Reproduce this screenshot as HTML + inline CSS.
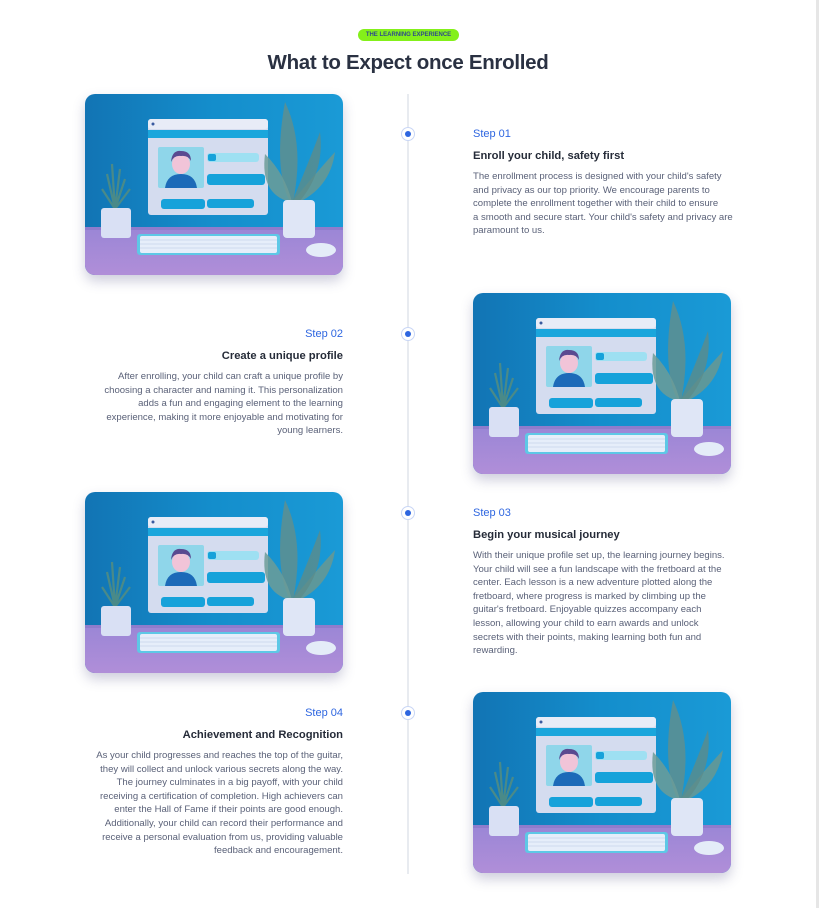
<!DOCTYPE html>
<html><head><meta charset="utf-8">
<style>
*{margin:0;padding:0;box-sizing:border-box}
html,body{width:819px;height:908px;background:#fff;overflow:hidden;font-family:"Liberation Sans",sans-serif}
.sb{position:absolute;right:0;top:0;width:3px;height:908px;background:#e6e6e6}
.tag{position:absolute;left:358px;top:29px;width:101px;height:12px;border-radius:6px;background:#84f01a;color:#2e4a8c;font-size:6px;font-weight:bold;text-align:center;line-height:12px}
h1{position:absolute;left:0;width:816px;top:51px;text-align:center;font-size:20.5px;color:#2a3142;font-weight:bold;letter-spacing:-0.3px}
.line{position:absolute;left:407px;top:94px;width:2px;height:780px;background:#e8ebf0}
.dot{position:absolute;left:401px;width:14px;height:14px;border-radius:50%;background:#fff;border:1px solid #c9d6f5}
.dot:after{content:"";position:absolute;left:3px;top:3px;width:6px;height:6px;border-radius:50%;background:#2e66e0}
.img{position:absolute;width:258px;height:181px;border-radius:10px;overflow:hidden;box-shadow:0 6px 12px rgba(60,60,120,.25)}
.txt{position:absolute;white-space:nowrap}
.txt.l{text-align:right;right:476px}
.txt.r{left:473px}
.st{font-size:11px;color:#2e66e0;height:14px}
.tt{font-size:11.2px;font-weight:bold;color:#252b38;margin-top:8px;height:14px}
.bd{font-size:9.55px;color:#5a6178;line-height:13.6px;margin-top:6px}
</style></head><body>
<div class="sb"></div>
<div class="tag">THE LEARNING EXPERIENCE</div>
<h1>What to Expect once Enrolled</h1>
<div class="line"></div>
<div class="dot" style="top:127px"></div>
<div class="dot" style="top:327px"></div>
<div class="dot" style="top:506px"></div>
<div class="dot" style="top:706px"></div>

<svg width="0" height="0" style="position:absolute">
<defs>
<linearGradient id="bg" x1="0" y1="0" x2="1" y2="0"><stop offset="0" stop-color="#1274b4"/><stop offset=".5" stop-color="#148ecc"/><stop offset="1" stop-color="#1a9ad6"/></linearGradient>
<linearGradient id="desk" x1="0" y1="0" x2="0" y2="1"><stop offset="0" stop-color="#9a86d6"/><stop offset="1" stop-color="#b08ed8"/></linearGradient>
<symbol id="ill" viewBox="0 0 258 181">
<rect width="258" height="181" fill="url(#bg)"/>
<rect y="133" width="258" height="48" fill="url(#desk)"/>
<rect y="133" width="258" height="3" fill="#8f7ccc"/>
<rect x="63" y="25" width="120" height="96" rx="3" fill="#d4dcef"/>
<rect x="63" y="25" width="120" height="10" rx="3" fill="#e8ecf7"/>
<rect x="63" y="36" width="120" height="8" fill="#1aa6dc"/>
<circle cx="68" cy="30" r="1.5" fill="#3a5aa0"/>
<rect x="73" y="53" width="46" height="41" rx="2" fill="#8fd6ea"/>
<ellipse cx="96" cy="70" rx="9" ry="10" fill="#f1c4d8"/>
<path d="M86 68 Q87 56 96 57 Q106 57 106 67 Q103 61 96 62 Q89 61 86 68Z" fill="#5a4a90"/>
<path d="M80 94 Q82 80 96 80 Q110 80 112 94Z" fill="#1c6ab8"/>
<rect x="122" y="59" width="52" height="9" rx="3" fill="#9ee0f2"/>
<rect x="122" y="80" width="58" height="11" rx="3" fill="#16a2da"/>
<rect x="76" y="105" width="44" height="10" rx="3" fill="#16a2da"/>
<rect x="122" y="105" width="47" height="9" rx="3" fill="#16a2da"/>
<rect x="123" y="60" width="8" height="7" rx="2" fill="#16a2da"/>
<path d="M205 108 Q188 75 200 8 Q220 50 208 108Z" fill="#5f8f8f" opacity=".85"/>
<path d="M205 108 Q175 100 180 60 Q200 80 207 108Z" fill="#6c9c98" opacity=".85"/>
<path d="M207 108 Q230 80 250 58 Q245 95 210 110Z" fill="#6a9890" opacity=".85"/>
<path d="M207 108 Q225 65 235 38 Q240 80 212 110Z" fill="#5d8c8a" opacity=".8"/>
<rect x="198" y="106" width="32" height="38" rx="4" fill="#dfe6f6"/>
<path d="M30 115 L22 80 M30 115 L35 75 M30 115 L40 85 M30 115 L27 70 M30 115 L45 95 M30 115 L17 95" stroke="#4a8a88" stroke-width="2.2"/>
<rect x="16" y="114" width="30" height="30" rx="3" fill="#d9e0f4"/>
<rect x="52" y="140" width="143" height="21" rx="3" fill="#5ec8e6"/>
<rect x="55" y="142" width="137" height="17" rx="2" fill="#e6eefa"/>
<g stroke="#b6c6e0" stroke-width=".6"><line x1="55" y1="146" x2="192" y2="146"/><line x1="55" y1="150" x2="192" y2="150"/><line x1="55" y1="154" x2="192" y2="154"/></g>
<ellipse cx="236" cy="156" rx="15" ry="7" fill="#e4ecf8"/>
</symbol>
</defs></svg>

<div class="img" style="left:85px;top:94px"><svg width="258" height="181"><use href="#ill"/></svg></div>
<div class="img" style="left:473px;top:293px"><svg width="258" height="181"><use href="#ill"/></svg></div>
<div class="img" style="left:85px;top:492px"><svg width="258" height="181"><use href="#ill"/></svg></div>
<div class="img" style="left:473px;top:692px"><svg width="258" height="181"><use href="#ill"/></svg></div>

<div class="txt r" style="top:128px"><div class="st">Step 01</div><div class="tt">Enroll your child, safety first</div>
<div class="bd">The enrollment process is designed with your child's safety<br>and privacy as our top priority. We encourage parents to<br>complete the enrollment together with their child to ensure<br>a smooth and secure start. Your child's safety and privacy are<br>paramount to us.</div></div>

<div class="txt l" style="top:328px"><div class="st">Step 02</div><div class="tt">Create a unique profile</div>
<div class="bd">After enrolling, your child can craft a unique profile by<br>choosing a character and naming it. This personalization<br>adds a fun and engaging element to the learning<br>experience, making it more enjoyable and motivating for<br>young learners.</div></div>

<div class="txt r" style="top:507px"><div class="st">Step 03</div><div class="tt">Begin your musical journey</div>
<div class="bd">With their unique profile set up, the learning journey begins.<br>Your child will see a fun landscape with the fretboard at the<br>center. Each lesson is a new adventure plotted along the<br>fretboard, where progress is marked by climbing up the<br>guitar's fretboard. Enjoyable quizzes accompany each<br>lesson, allowing your child to earn awards and unlock<br>secrets with their points, making learning both fun and<br>rewarding.</div></div>

<div class="txt l" style="top:707px"><div class="st">Step 04</div><div class="tt">Achievement and Recognition</div>
<div class="bd">As your child progresses and reaches the top of the guitar,<br>they will collect and unlock various secrets along the way.<br>The journey culminates in a big payoff, with your child<br>receiving a certification of completion. High achievers can<br>enter the Hall of Fame if their points are good enough.<br>Additionally, your child can record their performance and<br>receive a personal evaluation from us, providing valuable<br>feedback and encouragement.</div></div>
</body></html>
